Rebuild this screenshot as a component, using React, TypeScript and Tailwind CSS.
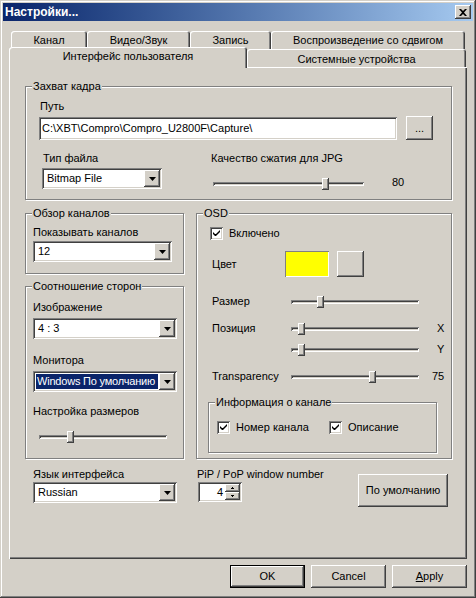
import React from "react";

const raised =
  "shadow-[inset_-1px_-1px_0_#404040,inset_1px_1px_0_#fff,inset_-2px_-2px_0_#808080,inset_2px_2px_0_#d4d0c8]";
const sunken =
  "shadow-[inset_1px_1px_0_#808080,inset_-1px_-1px_0_#fff,inset_2px_2px_0_#404040,inset_-2px_-2px_0_#d4d0c8]";

const Group = ({
  title,
  className,
  children,
}: {
  title: string;
  className: string;
  children?: React.ReactNode;
}) => (
  <div
    className={`relative flex flex-col border border-[#808080] shadow-[inset_1px_1px_0_#fff,1px_1px_0_#fff] ${className}`}
  >
    <span className="absolute left-[6px] -top-[7px] bg-[#d4d0c8] px-px leading-[13px]">
      {title}
    </span>
    {children}
  </div>
);

const Arrow = () => (
  <svg width="7" height="4" viewBox="0 0 7 4">
    <path d="M0 0h7L3.5 4z" fill="#000" />
  </svg>
);

const Combo = ({
  value,
  className,
  selected,
}: {
  value: string;
  className: string;
  selected?: boolean;
}) => (
  <div className={`flex h-[21px] bg-white p-[2px] ${sunken} ${className}`}>
    <div className="flex min-w-0 flex-1 items-center overflow-hidden whitespace-nowrap p-px">
      {selected ? (
        <span className="flex h-full w-full items-center bg-[#0a246a] pl-px tracking-[-0.2px] text-white">
          {value}
        </span>
      ) : (
        <span className="pl-[2px]">{value}</span>
      )}
    </div>
    <div
      className={`flex w-[16px] shrink-0 items-center justify-center bg-[#d4d0c8] ${raised}`}
    >
      <Arrow />
    </div>
  </div>
);

const Slider = ({ className, pos }: { className: string; pos: number }) => (
  <div className={`relative flex h-[12px] items-center ${className}`}>
    <div className={`h-[4px] w-full ${sunken}`} />
    <div
      className={`absolute top-0 h-[12px] w-[7px] bg-[#d4d0c8] ${raised}`}
      style={{ left: pos }}
    />
  </div>
);

const Check = ({ label }: { label: string }) => (
  <div className="flex items-center gap-[6px]">
    <div className={`h-[13px] w-[13px] bg-white ${sunken}`}>
      <svg width="13" height="13" viewBox="0 0 13 13">
        <path d="M3 5v2l2 2h1l4-4V3L6 7H5L3 5z" fill="#000" />
      </svg>
    </div>
    <span className="leading-[13px]">{label}</span>
  </div>
);

const Button = ({
  children,
  className,
  main,
}: {
  children: React.ReactNode;
  className: string;
  main?: boolean;
}) => (
  <div
    className={`flex items-center justify-center bg-[#d4d0c8] ${
      main
        ? "shadow-[inset_0_0_0_1px_#000,inset_-2px_-2px_0_#404040,inset_2px_2px_0_#fff,inset_-3px_-3px_0_#808080]"
        : raised
    } ${className}`}
  >
    {children}
  </div>
);

const Tab = ({ label, className }: { label: string; className: string }) => (
  <div
    className={`flex items-center justify-center rounded-t-[3px] bg-[#d4d0c8] ${className}`}
  >
    {label}
  </div>
);

const tabBack =
  "h-[18px] shadow-[inset_1px_1px_0_#fff,inset_-1px_0_0_#404040,inset_-2px_0_0_#808080]";
const tabFront =
  "h-[19px] shadow-[inset_1px_1px_0_#fff,inset_0_-1px_0_#fff,inset_-1px_0_0_#404040,inset_-2px_0_0_#808080]";

export default function App() {
  return (
    <div className="h-[598px] w-[476px] bg-[#d4d0c8] font-['Liberation_Sans',Arial,sans-serif] text-[11px] leading-[13px] text-black">
      <div className="flex h-full w-full flex-col p-[3px] shadow-[inset_-1px_-1px_0_#404040,inset_1px_1px_0_#d4d0c8,inset_-2px_-2px_0_#808080,inset_2px_2px_0_#fff]">
        {/* caption */}
        <div className="flex h-[18px] items-center bg-linear-to-r from-[#0a246a] to-[#a6caf0] pl-[2px] pr-[2px]">
          <span className="flex-1 text-[12px] font-bold text-white">Настройки...</span>
          <div className={`flex h-[14px] w-[16px] items-center justify-center bg-[#d4d0c8] ${raised}`}>
            <svg width="8" height="7" viewBox="0 0 8 7">
              <path d="M0 0h2l2 2 2-2h2L5 3.5 8 7H6L4 5 2 7H0l3-3.5z" fill="#000" />
            </svg>
          </div>
        </div>

        {/* tab strip, back row */}
        <div className="ml-[8px] mt-[10px] flex">
          <Tab label="Канал" className={`w-[76px] ${tabBack}`} />
          <Tab label="Видео/Звук" className={`w-[103px] ${tabBack}`} />
          <Tab label="Запись" className={`w-[81px] ${tabBack}`} />
          <Tab label="Воспроизведение со сдвигом" className={`w-[194px] ${tabBack}`} />
        </div>
        {/* tab strip, front row */}
        <div className="relative z-10 -mb-px ml-[6px] flex h-[19px] items-end">
          <Tab
            label="Интерфейс пользователя"
            className="h-[21px] w-[238px] pb-[3px] shadow-[inset_1px_1px_0_#fff,inset_-1px_0_0_#404040,inset_-2px_0_0_#808080]"
          />
          <Tab label="Системные устройства" className={`w-[219px] pt-px ${tabFront}`} />
        </div>

        {/* page */}
        <div className="ml-[6px] flex h-[492px] w-[458px] flex-col shadow-[inset_1px_1px_0_#fff,inset_-1px_-1px_0_#404040,inset_-2px_-2px_0_#808080]">
          <Group title="Захват кадра" className="ml-[16px] mt-[19px] h-[114px] w-[427px]">
            <span className="ml-[14px] mt-[13px]">Путь</span>
            <div className="mt-[3px] flex items-center">
              <div className={`ml-[13px] flex h-[23px] w-[358px] items-center bg-white pl-[3px] ${sunken}`}>
                C:\XBT\Compro\Compro_U2800F\Capture\
              </div>
              <Button className="ml-[9px] h-[24px] w-[27px]">...</Button>
            </div>
            <div className="mt-[12px] flex">
              <div className="ml-[16px] flex w-[120px] flex-col">
                <span className="pl-px">Тип файла</span>
                <Combo value="Bitmap File" className="mt-[3px] w-[120px]" />
              </div>
              <div className="ml-[49px] flex flex-col">
                <span>Качество сжатия для JPG</span>
                <div className="mt-[13px] flex items-center">
                  <Slider className="ml-[2px] w-[151px]" pos={109} />
                  <span className="ml-[28px] -mt-[3px]">80</span>
                </div>
              </div>
            </div>
          </Group>

          <div className="mt-[13px] flex">
            <div className="ml-[16px] flex w-[159px] flex-col">
              <Group title="Обзор каналов" className="h-[61px] w-[159px]">
                <span className="ml-[7px] mt-[12px]">Показывать каналов</span>
                <Combo value="12" className="ml-[7px] mt-[2px] w-[139px]" />
              </Group>
              <Group title="Соотношение сторон" className="mt-[12px] h-[173px] w-[159px]">
                <span className="ml-[7px] mt-[14px]">Изображение</span>
                <Combo value="4 : 3" className="ml-[7px] mt-[4px] w-[144px]" />
                <span className="ml-[7px] mt-[15px]">Монитора</span>
                <Combo value="Windows По умолчанию" selected className="ml-[7px] mt-[4px] w-[144px]" />
                <span className="ml-[7px] mt-[13px]">Настройка размеров</span>
                <Slider className="ml-[13px] mt-[13px] w-[128px]" pos={28} />
              </Group>
            </div>

            <Group title="OSD" className="ml-[12px] h-[246px] w-[256px]">
              <div className="ml-[13px] mt-[13px]">
                <Check label="Включено" />
              </div>
              <div className="mt-[11px] flex items-center">
                <span className="ml-[15px] w-[73px]">Цвет</span>
                <div className="h-[26px] w-[44px] bg-[#ffff00] shadow-[inset_1px_1px_0_#808080,inset_-1px_-1px_0_#fff]" />
                <Button className="ml-[8px] h-[26px] w-[27px]">{null}</Button>
              </div>
              <div className="mt-[18px] flex items-center">
                <span className="ml-[15px] w-[79px]">Размер</span>
                <Slider className="w-[128px]" pos={26} />
              </div>
              <div className="mt-[14px] flex items-center">
                <span className="ml-[15px] w-[79px]">Позиция</span>
                <Slider className="w-[128px]" pos={7} />
                <span className="ml-[18px]">X</span>
              </div>
              <div className="mt-[8px] flex items-center">
                <span className="ml-[15px] w-[79px]" />
                <Slider className="w-[128px]" pos={7} />
                <span className="ml-[18px]">Y</span>
              </div>
              <div className="mt-[14px] flex items-center">
                <span className="ml-[15px] w-[79px]">Transparency</span>
                <Slider className="w-[128px]" pos={78} />
                <span className="ml-[13px]">75</span>
              </div>
              <Group title="Информация о канале" className="ml-[11px] mt-[19px] h-[51px] w-[229px]">
                <div className="ml-[8px] mt-[18px] flex">
                  <div className="w-[112px]">
                    <Check label="Номер канала" />
                  </div>
                  <Check label="Описание" />
                </div>
              </Group>
            </Group>
          </div>

          <div className="mt-[9px] flex items-start">
            <div className="ml-[24px] flex w-[144px] flex-col">
              <span>Язык интерфейса</span>
              <Combo value="Russian" className="mt-[1px] w-[144px]" />
            </div>
            <div className="ml-[20px] flex w-[161px] flex-col">
              <span>PiP / PoP window number</span>
              <div className={`ml-px mt-[1px] flex h-[20px] w-[44px] bg-white p-[2px] ${sunken}`}>
                <span className="flex flex-1 items-center justify-end pr-[2px]">4</span>
                <div className="flex w-[15px] flex-col">
                  <div className={`flex flex-1 items-center justify-center bg-[#d4d0c8] ${raised}`}>
                    <svg width="3" height="2" viewBox="0 0 3 2">
                      <path d="M1 0h1v1h1v1H0V1h1z" fill="#000" />
                    </svg>
                  </div>
                  <div className={`flex flex-1 items-center justify-center bg-[#d4d0c8] ${raised}`}>
                    <svg width="3" height="2" viewBox="0 0 3 2">
                      <path d="M0 0h3v1H2v1H1V1H0z" fill="#000" />
                    </svg>
                  </div>
                </div>
              </div>
            </div>
            <Button className="mt-[6px] h-[33px] w-[90px]">По умолчанию</Button>
          </div>
        </div>

        {/* dialog buttons */}
        <div className="mr-[6px] mt-[6px] flex justify-end gap-[6px]">
          <Button main className="h-[23px] w-[75px]">OK</Button>
          <Button className="h-[23px] w-[75px]">Cancel</Button>
          <Button className="h-[23px] w-[75px]">
            <span>
              <span className="underline">A</span>pply
            </span>
          </Button>
        </div>
      </div>
    </div>
  );
}
